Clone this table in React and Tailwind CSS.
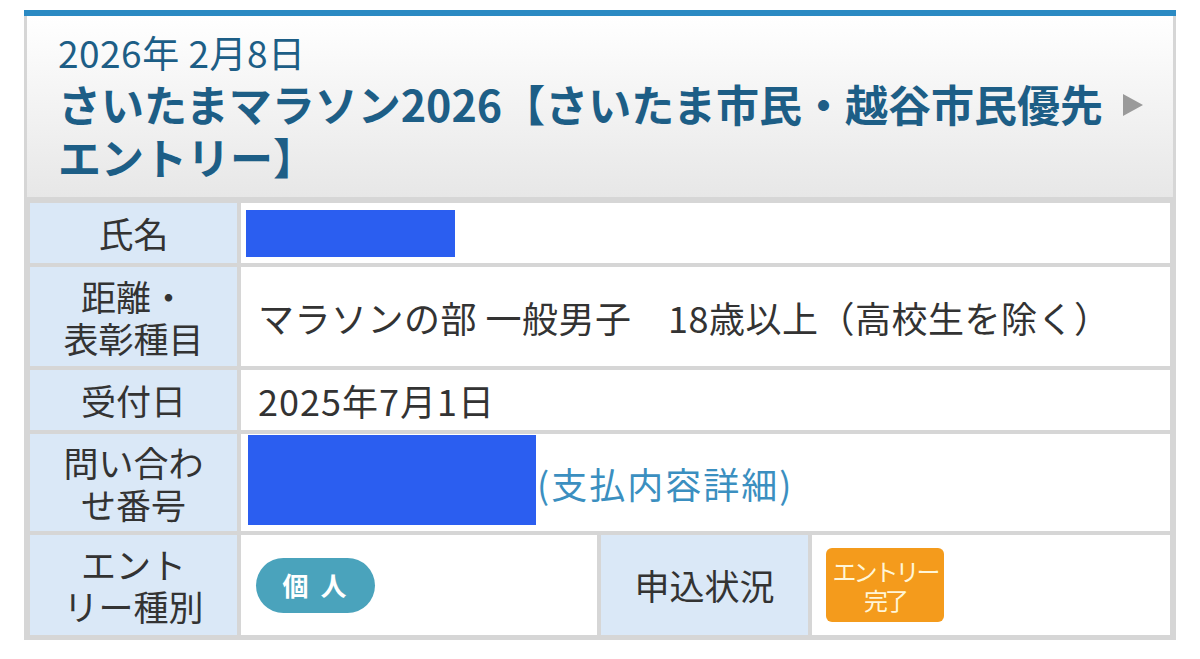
const font = { fontFamily: '"Noto Sans CJK JP", "Noto Sans", sans-serif' };

function Label({ children, className = '' }) {
  return (
    <div
      className={`bg-[#dae8f7] flex items-center justify-center text-center text-[35px] leading-[42px] text-[#333] ${className}`}
    >
      <div>{children}</div>
    </div>
  );
}

function Value({ children, className = '' }) {
  return (
    <div className={`bg-white flex items-center text-[36px] leading-[42px] text-[#333] ${className}`}>
      {children}
    </div>
  );
}

export default function App() {
  return (
    <div className="w-[1200px] h-[659px] bg-white pt-[10px] px-[24px]" style={font}>
      <div className="border-t-[6px] border-[#2b8ac3]">
        {/* Header */}
        <div className="border-x-[3px] border-[#d6d6d6] bg-gradient-to-b from-white to-[#e7e7e7] pl-[31px] pr-[30px] pt-[15px] pb-[14px]">
          <div className="text-[37px] leading-[42px] tracking-[0.5px] text-[#1d5e86]">2026年 2月8日</div>
          <div className="mt-[4px] flex items-start">
            <div className="flex-1 text-[43px] leading-[53px] font-bold text-[#1d5e86]">
              さいたまマラソン2026【さいたま市民・越谷市民優先
              <br />
              エントリー】
            </div>
            <svg width="20" height="22" viewBox="0 0 20 22" className="mt-[17px] ml-[10px] shrink-0">
              <polygon points="0,0 20,11 0,22" fill="#9a9a9a" />
            </svg>
          </div>
        </div>

        {/* Table */}
        <div className="bg-[#d6d6d6] px-[6px] pt-[6px] pb-[5px] grid grid-cols-[207px_356px_207px_358px] gap-[4px]">
          <Label className="h-[60px]">氏名</Label>
          <Value className="col-span-3 pl-[5px]">
            <div className="w-[209px] h-[47px] bg-[#2b5ef0]" />
          </Value>

          <Label className="h-[99px]">
            距離・
            <br />
            表彰種目
          </Label>
          <Value className="col-span-3 pl-[17px] tracking-[0.5px]">マラソンの部 一般男子　18歳以上（高校生を除く）</Value>

          <Label className="h-[60px]">受付日</Label>
          <Value className="col-span-3 pl-[17px] tracking-[1px]">2025年7月1日</Value>

          <Label className="h-[97px]">
            問い合わ
            <br />
            せ番号
          </Label>
          <Value className="col-span-3 pl-[7px]">
            <div className="w-[288px] h-[90px] bg-[#2b5ef0] self-start mt-[1px]" />
            <span className="text-[#3b8fc0] ml-[1px] tracking-[2px]">(支払内容詳細)</span>
          </Value>

          <Label className="h-[100px]">
            エント
            <br />
            リー種別
          </Label>
          <Value className="pl-[15px]">
            <div className="w-[119px] h-[55px] rounded-full bg-[#4aa3bc] flex items-center justify-center text-white text-[26px] leading-[30px] font-semibold tracking-[12px] pl-[10px]">
              個人
            </div>
          </Value>
          <Label>申込状況</Label>
          <Value className="pl-[14px]">
            <div className="w-[118px] h-[74px] rounded-[6px] bg-[#f49b1c] flex flex-col items-center justify-center text-[#fff6d8] text-[24px] leading-[29px] tracking-[-3px]">
              <span>エントリー</span>
              <span>完了</span>
            </div>
          </Value>
        </div>
      </div>
    </div>
  );
}
